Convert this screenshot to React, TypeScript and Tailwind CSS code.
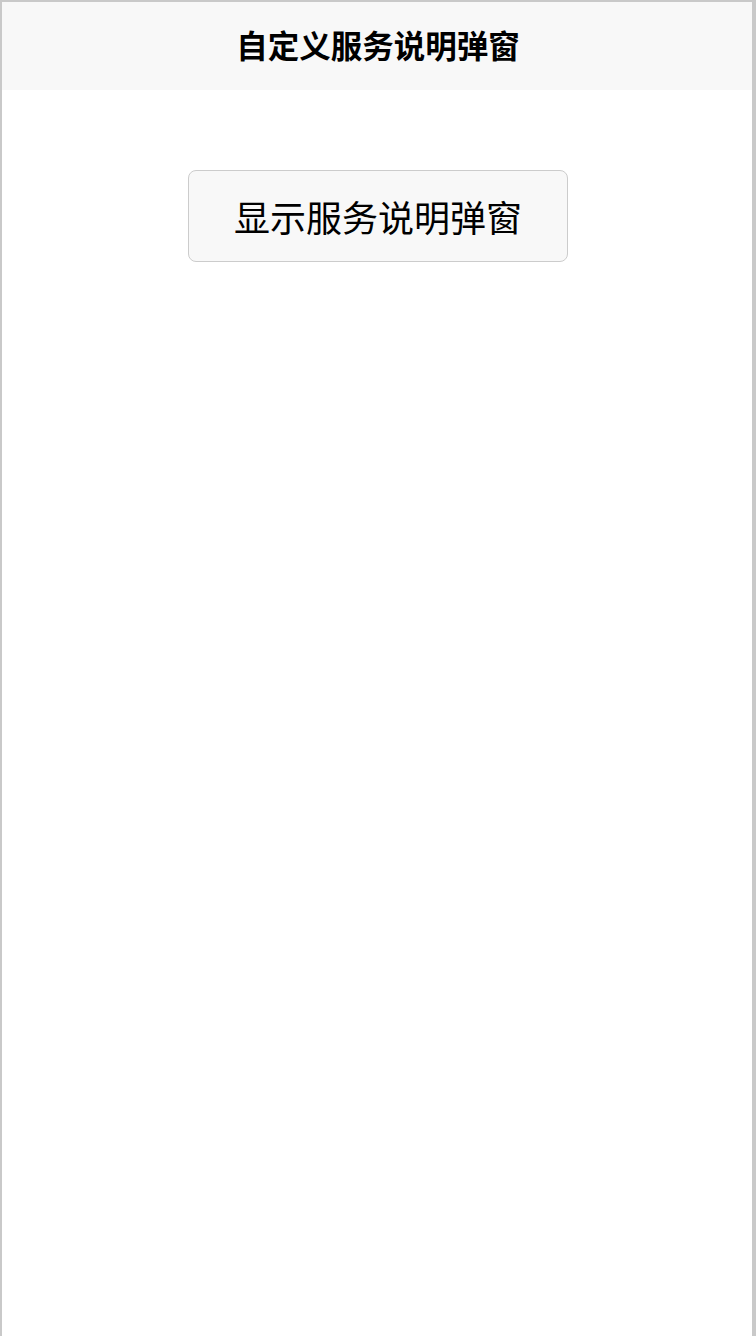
export default function App() {
  return (
    <div
      className="w-[756px] h-[1336px] bg-white border-l-2 border-t-2 border-r-4 border-[#c9c9c9] flex flex-col"
      style={{ fontFamily: '"Noto Sans CJK SC", sans-serif' }}
    >
      <div className="h-[88px] bg-[#f8f8f8] flex items-center justify-center pb-[3px] pl-[2px]">
        <span className="text-[31.5px] font-semibold text-black leading-none">自定义服务说明弹窗</span>
      </div>
      <div className="flex justify-center pt-[80px] pl-[2px]">
        <button className="w-[380px] h-[92px] rounded-[8px] border border-[#cccccc] bg-[#f8f8f8] flex items-center justify-center">
          <span className="text-[36px] text-black leading-none">显示服务说明弹窗</span>
        </button>
      </div>
    </div>
  );
}
